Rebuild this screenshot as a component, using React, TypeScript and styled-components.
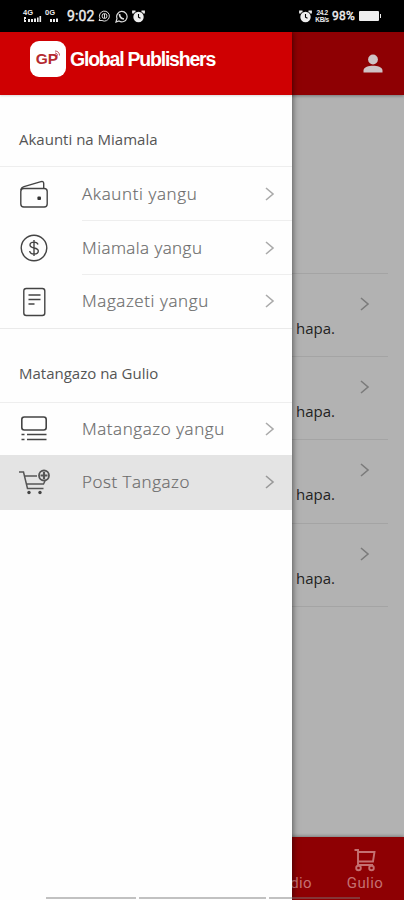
import React from "react";
import styled, { createGlobalStyle } from "styled-components";

const GlobalStyle = createGlobalStyle`
  * { box-sizing: border-box; }
  body { margin: 0; font-family: "Open Sans", "Noto Sans", sans-serif; background: #b2b2b2; }
`;

const Screen = styled.div`
  position: relative;
  display: flex;
  flex-direction: column;
  width: 404px;
  height: 900px;
  overflow: hidden;
  background: #b2b2b2;
`;

const StatusBar = styled.div`
  display: flex;
  align-items: center;
  justify-content: space-between;
  height: 32px;
  flex: none;
  padding: 0 22px 0 23px;
  background: #000;
  color: #eee;
`;

const StatusGroup = styled.div<{ $gap: number }>`
  display: flex;
  align-items: center;
  gap: ${(p) => p.$gap}px;
`;

const Signal = styled.div`
  display: flex;
  flex-direction: column;
  width: 18px;
  font: 700 7.5px/7px "Liberation Sans", sans-serif;
`;

const Clock = styled.span<{ $size: number; $spacing: number }>`
  font: 400 ${(p) => p.$size}px/16px Roboto, sans-serif;
  letter-spacing: ${(p) => p.$spacing}px;
  -webkit-text-stroke: 0.4px #eee;
`;

const Rate = styled.div`
  width: 14px;
  font: 700 6.5px/7px "Liberation Sans", sans-serif;
  letter-spacing: -0.3px;
  text-align: center;
`;

const PageHeader = styled.header`
  display: flex;
  align-items: center;
  justify-content: flex-end;
  flex: none;
  height: 63px;
  padding-right: 21px;
  background: #8e0003;
  box-shadow: 0 1px 3px rgba(0, 0, 0, 0.35);
`;

const PageList = styled.main`
  display: flex;
  flex-direction: column;
  flex: 1;
  padding: 178px 16px 0 280px;
`;

const PageItem = styled.div`
  display: flex;
  flex-direction: column;
  height: 83.2px;
  padding: 22px 17px 0 16px;
  border-top: 1px solid #a4a4a4;
  color: #222;
  font-size: 15px;
  line-height: 20px;
  &:last-child { height: 1px; padding: 0; }
  svg { align-self: flex-end; }
`;

const ItemText = styled.span`
  margin-top: 6px;
`;

const BottomNav = styled.nav`
  display: flex;
  justify-content: flex-end;
  flex: none;
  height: 63px;
  padding: 10px 19px 0 0;
  background: #8e0003;
  box-shadow: 0 -1px 3px rgba(0, 0, 0, 0.3);
`;

const NavTab = styled.div<{ $width: number; $shift?: number }>`
  display: flex;
  flex-direction: column;
  align-items: center;
  width: ${(p) => p.$width}px;
  margin-right: ${(p) => p.$shift ?? 0}px;
  color: #c57172;
  font: 400 15px/18px Roboto, sans-serif;
  letter-spacing: 0.4px;
  svg { flex: none; height: 25px; margin-bottom: 2px; }
`;

const NavSpacer = styled.div`
  height: 27px;
  flex: none;
`;

const Drawer = styled.aside`
  position: absolute;
  top: 32px;
  left: 0;
  bottom: 0;
  width: 292px;
  display: flex;
  flex-direction: column;
  background: #fefefe;
  box-shadow: 1px 0 6px rgba(0, 0, 0, 0.5);
`;

const DrawerHeader = styled.div`
  display: flex;
  align-items: center;
  gap: 4px;
  height: 63px;
  flex: none;
  padding: 0 0 9px 30px;
  background: #cf0002;
  box-shadow: 0 1px 2px rgba(0, 0, 0, 0.15);
`;

const Logo = styled.div`
  display: flex;
  align-items: center;
  justify-content: center;
  width: 36px;
  height: 36px;
  border-radius: 9px;
  background: #fff;
  color: #b52a30;
  font: 700 15.5px/36px "Liberation Sans", sans-serif;
  svg { width: 5px; height: 13px; margin: -5px 0 0 -3px; }
`;

const Brand = styled.span`
  color: #fff;
  font: 700 19.5px/24px "Liberation Sans", sans-serif;
  letter-spacing: -1.22px;
`;

const SectionTitle = styled.h2<{ $height: number }>`
  margin: 0;
  height: ${(p) => p.$height}px;
  padding: 34px 0 0 19px;
  border-bottom: 1px solid #eee;
  color: #555;
  font-size: 15px;
  font-weight: 400;
  line-height: 20px;
`;

const MenuRow = styled.div<{ $height: number; $selected?: boolean }>`
  display: flex;
  height: ${(p) => p.$height}px;
  padding-left: 18px;
  background: ${(p) => (p.$selected ? "#e4e4e4" : "transparent")};
`;

const IconSlot = styled.div`
  display: flex;
  align-items: center;
  width: 64px;
  flex: none;
`;

const RowBody = styled.div<{ $line: boolean }>`
  display: flex;
  flex: 1;
  align-items: center;
  justify-content: space-between;
  padding: 0 16px 0 0;
  border-bottom: 1px solid ${(p) => (p.$line ? "#eee" : "transparent")};
`;

const Label = styled.span<{ $spacing: number }>`
  color: #6a6a6a;
  font-size: 17px;
  font-weight: 300;
  line-height: 24px;
  white-space: nowrap;
  letter-spacing: ${(p) => p.$spacing}px;
  -webkit-text-stroke: 0.2px #6a6a6a;
`;

const SectionEnd = styled.div`
  height: 1px;
  background: #eaeaea;
`;

const GestureBars = styled.div`
  position: absolute;
  left: 46px;
  bottom: 1px;
  display: flex;
  gap: 3px;
`;

const GestureBar = styled.i<{ $width: number }>`
  width: ${(p) => p.$width}px;
  height: 2px;
  background: rgba(120, 120, 120, 0.45);
`;

const Chevron = ({ color }: { color: string }) => (
  <svg width="12" height="16" viewBox="0 0 12 16" fill="none" stroke={color} strokeWidth="1.6">
    <path d="M2 2l7 6-7 6" />
  </svg>
);

const SignalBars = ({ full }: { full?: boolean }) => (
  <svg width="19" height="7" viewBox="0 0 19 7" fill="#eee">
    {full && <path d="M1 1h2v2H2v1h1v2H1z" />}
    <path d="M5 3h2v3H5zM8 3h2v3H8zM11 2.500h2V6h-2z" />
    {full && <path d="M14 1.500h1.600V6H14zM16.500 0h1.600v6h-1.600z" />}
  </svg>
);

const Alarm = () => (
  <svg width="13" height="13" viewBox="0 0 13 13">
    <path d="M1 3.500V1.500h2.500M12 3.500V1.500H9.500" fill="none" stroke="#eee" strokeWidth="1.800" />
    <circle cx="6.500" cy="7" r="5.200" fill="#eee" />
    <path d="M6.500 4v3.200l2 1" fill="none" stroke="#000" strokeWidth="1.100" />
  </svg>
);

const Wallet = () => (
  <svg width="32" height="32" viewBox="0 0 32 32" fill="none" stroke="#444" strokeWidth="1.4">
    <rect x="2.800" y="10.500" width="26.400" height="18.500" rx="3" />
    <path d="M3 12c0-2 1-2.800 3-3.400l17-5c1.800-.5 2.700.2 2.700 2v4.800" />
    <rect x="19.400" y="18.400" width="3.600" height="3.600" rx="1" fill="#333" stroke="none" />
  </svg>
);

const Dollar = () => (
  <svg width="32" height="32" viewBox="0 0 32 32" fill="none" stroke="#444" strokeWidth="1.4">
    <circle cx="16" cy="16" r="12.800" />
    <path d="M20 12.500c-.4-1.500-1.800-2.400-4-2.400-2.400 0-4 1.100-4 2.900 0 4.200 8.300 1.800 8.300 6 0 1.800-1.700 3-4.200 3-2.600 0-4.200-1.100-4.400-3M16 8v16" />
  </svg>
);

const Paper = () => (
  <svg width="32" height="32" viewBox="0 0 32 32" fill="none" stroke="#444" strokeWidth="1.4">
    <rect x="5.800" y="2.500" width="21" height="27" rx="2.500" />
    <path d="M10.500 9h12M10.500 13.500h12M10.500 18h6" />
  </svg>
);

const Adverts = () => (
  <svg width="32" height="32" viewBox="0 0 32 32" fill="none" stroke="#444" strokeWidth="1.6">
    <rect x="3.800" y="4" width="24.400" height="13" rx="2.500" />
    <path d="M3.500 21.500h3M9 21.500h19.500M3.500 26.500h3M9 26.500h19.500" />
  </svg>
);

const CartAdd = () => (
  <svg width="34" height="32" viewBox="0 0 34 32" fill="none" stroke="#555" strokeWidth="1.500">
    <path d="M1 5h4.500l4 16.500h16M7 9h12M8.500 17h17l1.500-3" />
    <circle cx="26" cy="8.500" r="5" strokeWidth="1.800" />
    <path d="M26 5v7M22.500 8.500h7" strokeWidth="2.200" />
    <circle cx="11" cy="25.500" r="1.700" fill="#444" stroke="none" />
    <circle cx="22" cy="25.500" r="1.700" fill="#444" stroke="none" />
  </svg>
);

const accountRows = [
  { label: "Akaunti yangu", icon: <Wallet />, spacing: 0.63 },
  { label: "Miamala yangu", icon: <Dollar />, spacing: 0.45 },
  { label: "Magazeti yangu", icon: <Paper />, spacing: 0.6 },
];

export default function App() {
  return (
    <>
      <GlobalStyle />
      <Screen>
        <StatusBar>
          <StatusGroup $gap={4}>
            <Signal>4G<SignalBars full /></Signal>
            <Signal>0G<SignalBars /></Signal>
            <Clock $size={14} $spacing={0.1}>9:02</Clock>
            <svg width="13" height="12" viewBox="0 0 13 12" fill="none" stroke="#ddd">
              <path d="M1 10.500l1-2A5 5 0 1 1 4 10.500z" />
              <circle cx="6.500" cy="6" r="2.500" /><path d="M6.500 4v4" />
            </svg>
            <svg width="13" height="13" viewBox="0 0 13 13" fill="none" stroke="#ddd" strokeWidth="1.200">
              <path d="M1 12l1-3.500A5.200 5.200 0 1 1 4 11z" />
              <path d="M4.500 4c0 3 1.500 4.500 4.500 5" strokeWidth="1.700" />
            </svg>
            <Alarm />
          </StatusGroup>
          <StatusGroup $gap={3}>
            <Alarm />
            <Rate>24.2 KB/s</Rate>
            <Clock $size={12} $spacing={0.2}>98%</Clock>
            <svg width="24" height="12" viewBox="0 0 24 12" fill="#eee">
              <rect x="1" y="1" width="20" height="10" rx="1" /><path d="M22 4h1v4h-1z" />
            </svg>
          </StatusGroup>
        </StatusBar>
        <PageHeader>
          <svg width="20" height="20" viewBox="0 0 20 20" fill="#cfc3c6">
            <circle cx="10" cy="5.500" r="4.900" />
            <path d="M.5 18.500V16.500C.5 13 6 11.700 10 11.700s9.500 1.300 9.500 4.800v2z" />
          </svg>
        </PageHeader>
        <PageList>
          {[0, 1, 2, 3].map((n) => (
            <PageItem key={n}>
              <Chevron color="#7b7b7b" />
              <ItemText>hapa.</ItemText>
            </PageItem>
          ))}
          <PageItem />
        </PageList>
        <BottomNav>
          <NavTab $width={60} $shift={23}><NavSpacer />Radio</NavTab>
          <NavTab $width={40}>
            <svg width="24" viewBox="0 0 24 25" fill="none" stroke="#c57172" strokeWidth="1.900">
              <path d="M1.500 3H5v15.500M5 5h16.500L20 14.500H5M5 18h15" />
              <circle cx="5.500" cy="21" r="2.300" /><circle cx="18.500" cy="21" r="2.300" />
            </svg>
            Gulio
          </NavTab>
        </BottomNav>
        <Drawer>
          <DrawerHeader>
            <Logo>
              GP
              <svg viewBox="0 0 5 13" fill="none" stroke="#b52a30" strokeWidth=".8">
                <path d="M0 1c3 0 4.500 2 4.500 4.500M0 3c1.500 0 2.500 1 2.500 2.500" />
              </svg>
            </Logo>
            <Brand>Global Publishers</Brand>
          </DrawerHeader>
          <SectionTitle $height={72}>Akaunti na Miamala</SectionTitle>
          {accountRows.map((row, i) => (
            <MenuRow key={row.label} $height={i === 2 ? 53 : 54}>
              <IconSlot>{row.icon}</IconSlot>
              <RowBody $line={i < 2}>
                <Label $spacing={row.spacing}>{row.label}</Label>
                <Chevron color="#aaa" />
              </RowBody>
            </MenuRow>
          ))}
          <SectionEnd />
          <SectionTitle $height={74}>Matangazo na Gulio</SectionTitle>
          <MenuRow $height={52}>
            <IconSlot><Adverts /></IconSlot>
            <RowBody $line={false}>
              <Label $spacing={0.57}>Matangazo yangu</Label>
              <Chevron color="#aaa" />
            </RowBody>
          </MenuRow>
          <MenuRow $height={55} $selected>
            <IconSlot><CartAdd /></IconSlot>
            <RowBody $line={false}>
              <Label $spacing={0.53}>Post Tangazo</Label>
              <Chevron color="#999" />
            </RowBody>
          </MenuRow>
        </Drawer>
        <GestureBars>
          <GestureBar $width={90} />
          <GestureBar $width={127} />
          <GestureBar $width={91} />
        </GestureBars>
      </Screen>
    </>
  );
}
